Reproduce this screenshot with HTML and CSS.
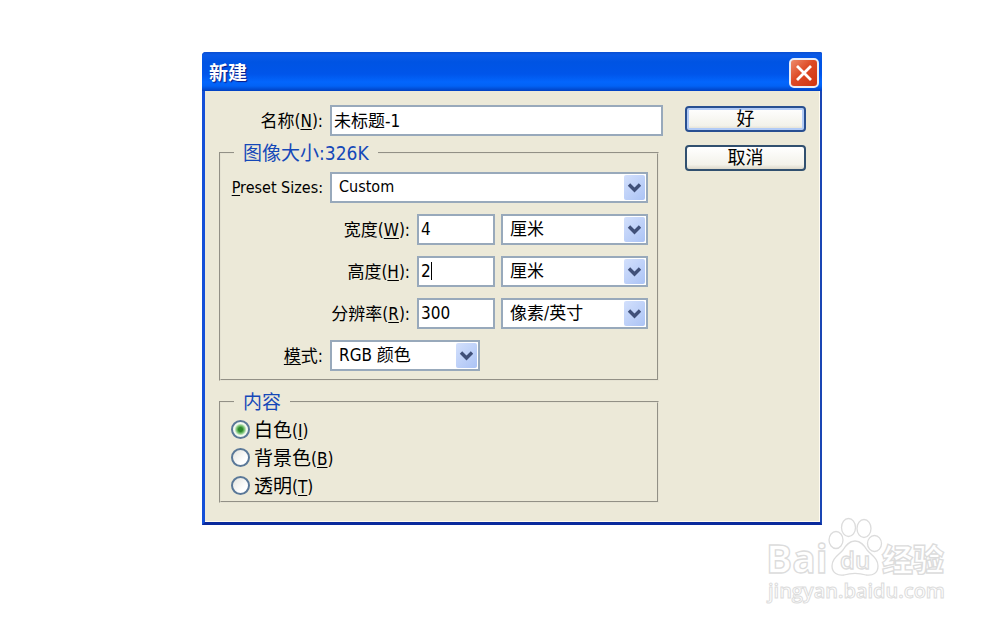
FILE: index.html
```html
<!DOCTYPE html>
<html lang="zh-CN">
<head>
<meta charset="utf-8">
<title>新建</title>
<link rel="stylesheet" href="styles.css">
</head>
<body>
<svg class="defs" aria-hidden="true">
  <symbol id="chevron" viewBox="0 0 21 25"><path d="M5 9.5 10.5 15 16 9.5" fill="none" stroke="#405079" stroke-width="3.4"/></symbol>
</svg>
<main class="dialog">
  <header class="titlebar">
    <h1 class="title">新建</h1>
    <button class="close" type="button" aria-label="关闭">
      <svg viewBox="0 0 26 26" class="close-icon"><path d="M6 6 20 20M20 6 6 20" stroke="#fff" stroke-width="2.8"/></svg>
    </button>
  </header>
  <form class="content">
    <div class="settings">
      <div class="row name-row">
        <label class="label" for="name">名称(<u>N</u>):</label>
        <input class="field grow" id="name" type="text" value="未标题-1">
      </div>
      <fieldset class="group size-group">
        <legend class="legend">图像大小:326K</legend>
        <div class="row">
          <label class="label latin" for="preset"><u>P</u>reset Sizes:</label>
          <div class="select grow"><select class="field latin" id="preset"><option>Custom</option></select><svg class="arrow"><use href="#chevron"/></svg></div>
        </div>
        <div class="row">
          <label class="label wide" for="width">宽度(<u>W</u>):</label>
          <div class="entry"><input class="field" id="width" type="text" value="4"></div>
          <div class="select grow"><select class="field" aria-label="宽度单位"><option>厘米</option></select><svg class="arrow"><use href="#chevron"/></svg></div>
        </div>
        <div class="row">
          <label class="label wide" for="height">高度(<u>H</u>):</label>
          <div class="entry"><input class="field" id="height" type="text" value="2"><span class="caret"></span></div>
          <div class="select grow"><select class="field" aria-label="高度单位"><option>厘米</option></select><svg class="arrow"><use href="#chevron"/></svg></div>
        </div>
        <div class="row">
          <label class="label wide" for="resolution">分辨率(<u>R</u>):</label>
          <div class="entry"><input class="field" id="resolution" type="text" value="300"></div>
          <div class="select grow"><select class="field" aria-label="分辨率单位"><option>像素/英寸</option></select><svg class="arrow"><use href="#chevron"/></svg></div>
        </div>
        <div class="row">
          <label class="label" for="mode"><u>模</u>式:</label>
          <div class="select mode"><select class="field" id="mode"><option>RGB 颜色</option></select><svg class="arrow"><use href="#chevron"/></svg></div>
        </div>
      </fieldset>
      <fieldset class="group fill-group">
        <legend class="legend">内容</legend>
        <label class="choice"><input class="radio" type="radio" name="fill" checked><span>白色<small>(<u>I</u>)</small></span></label>
        <label class="choice"><input class="radio" type="radio" name="fill"><span>背景色<small>(<u>B</u>)</small></span></label>
        <label class="choice"><input class="radio" type="radio" name="fill"><span>透明<small>(<u>T</u>)</small></span></label>
      </fieldset>
    </div>
    <div class="actions">
      <button class="button primary" type="submit">好</button>
      <button class="button" type="button">取消</button>
    </div>
  </form>
</main>
<svg class="watermark" viewBox="0 0 200 100" role="img" aria-label="Baidu 经验">
  <g class="outline">
    <text x="6" y="63" class="brand">Bai</text>
    <path d="M95 31C89 31 86 35 83 40C79 45 72 48 72 56C72 63 78 66 84 65C91 63 99 63 106 65C113 66 118 63 118 56C118 48 111 45 107 40C104 35 101 31 95 31Z"/>
    <ellipse cx="76" cy="30" rx="7" ry="8.5"/>
    <ellipse cx="88.5" cy="17.5" rx="7" ry="9"/>
    <ellipse cx="104" cy="18.5" rx="7" ry="9"/>
    <ellipse cx="114.5" cy="33.5" rx="7" ry="8"/>
    <text x="80" y="59" class="du">du</text>
    <text x="122" y="61" class="jingyan">经验</text>
    <text x="8" y="88" class="url">jingyan.baidu.com</text>
  </g>
</svg>
</body>
</html>
```
FILE: styles.css
```css
* {
  box-sizing: border-box;
}

body {
  margin: 0;
  padding: 52px 178px 0 202px;
  background: #fff;
  color: #000;
  font: 17px/24px "DejaVu Sans Condensed", "Noto Sans CJK SC", sans-serif;
}

.defs {
  position: absolute;
  width: 0;
  height: 0;
}

.dialog {
  border: solid #1450d8;
  border-width: 0 2px 3px 3px;
  border-right-color: #1a46b4;
  border-bottom-color: #0a2a9c;
  border-radius: 4px 2px 0 0;
  background: #ece9d8;
}

.titlebar {
  display: flex;
  align-items: center;
  justify-content: space-between;
  height: 39px;
  margin: 0 -2px 0 -3px;
  padding: 2px 3px 0 7px;
  border-radius: 4px 2px 0 0;
  background: linear-gradient(#0a4ed0 0, #0a5ae8 3px, #0054e3 10px, #0055ea 22px, #0366fd 30px, #0262f5 34px, #0140c0 39px);
}

.title {
  margin: 0;
  color: #fff;
  font-size: 19px;
  font-weight: 700;
  text-shadow: 1px 1px 1px #0a1883;
}

.close {
  width: 30px;
  height: 30px;
  padding: 0;
  border: 2px solid #e8edf8;
  border-radius: 5px;
  background: linear-gradient(135deg, #ee8b6c, #dd4a25 45%, #cf3410);
}

.close-icon {
  display: block;
}

.content {
  display: flex;
  gap: 22px;
  padding: 14px 13px 18px 14px;
  border: solid #fffbf0;
  border-width: 0 1px 1px 0;
}

.settings {
  flex: 1;
}

.row {
  display: flex;
  align-items: center;
}

.row + .row {
  margin-top: 11px;
}

.name-row {
  margin-bottom: 5px;
}

.label {
  flex: none;
  width: 104px;
  margin-right: 7px;
  text-align: right;
  white-space: nowrap;
}

.group .label {
  width: 93px;
}

.group .label.wide {
  width: 180px;
}

.latin,
.group .latin {
  font-size: 16px;
}

u {
  text-underline-offset: 2px;
}

.field {
  display: block;
  width: 100%;
  height: 31px;
  margin: 0;
  padding: 0 2px 2px;
  border: 2px solid #98a9bb;
  border-radius: 0;
  outline: 0;
  background: #fff;
  color: #000;
  font: inherit;
  appearance: none;
}

.grow {
  flex: 1;
  min-width: 0;
}

.select {
  position: relative;
}

.select .field {
  padding: 0 28px 2px 7px;
}

.arrow {
  position: absolute;
  top: 3px;
  right: 3px;
  width: 21px;
  height: 25px;
  border-radius: 2px;
  background: linear-gradient(135deg, #d3e0fc, #abc3f5);
  pointer-events: none;
}

.entry {
  position: relative;
  width: 78px;
  margin-right: 6px;
}

.caret {
  position: absolute;
  top: 6px;
  left: 14px;
  width: 1px;
  height: 18px;
  background: #000;
}

.mode {
  width: 150px;
}

.group {
  min-width: 0;
  margin: 0 4px 0 0;
  padding: 0 9px 8px;
  border: 2px groove #e6e3d3;
}

.size-group {
  padding-top: 7px;
}

.fill-group {
  margin-top: 9px;
  padding: 1px 10px 2px;
}

.legend {
  margin-left: 4px;
  padding: 0 9px;
  color: #1548b8;
  font-size: 19px;
}

.fill-group .legend {
  margin-left: 3px;
}

.choice {
  display: flex;
  align-items: center;
  gap: 4px;
  height: 28px;
  font-size: 19px;
}

.choice span {
  padding-top: 2px;
}

.choice small {
  font-size: 17px;
}

.radio {
  width: 19px;
  height: 19px;
  margin: 0;
  border: 2px solid #5a7898;
  border-radius: 50%;
  background: linear-gradient(135deg, #e4e4de, #fff 70%);
  appearance: none;
}

.radio:checked {
  background: radial-gradient(circle, #2c8a2c 0 2px, #7fc77a 4px, #f2faf0 6px);
}

.actions {
  display: flex;
  flex: 0 0 121px;
  flex-direction: column;
  gap: 13px;
  padding-top: 1px;
}

.button {
  height: 26px;
  padding: 0;
  border: 2px solid #31506f;
  border-radius: 4px;
  background: linear-gradient(#fff, #f3f2ea 80%, #dcd8ca);
  color: #000;
  font: inherit;
  font-size: 18px;
  line-height: 20px;
}

.primary {
  border-color: #284f91;
  box-shadow: inset 0 0 0 2px #b2cbf6;
}

.watermark {
  position: absolute;
  top: 510px;
  right: 40px;
  width: 200px;
  height: 100px;
}

.outline {
  fill: #fff;
  stroke: #dcdcdc;
  stroke-width: 1.3;
}

.brand {
  font: 700 39px "Open Sans", sans-serif;
}

.du {
  font: 600 24px "Open Sans", sans-serif;
}

.jingyan {
  font: 900 31px "Noto Sans CJK SC", sans-serif;
}

.url {
  font: 600 20px "Open Sans", sans-serif;
  stroke-width: 1;
}
```
